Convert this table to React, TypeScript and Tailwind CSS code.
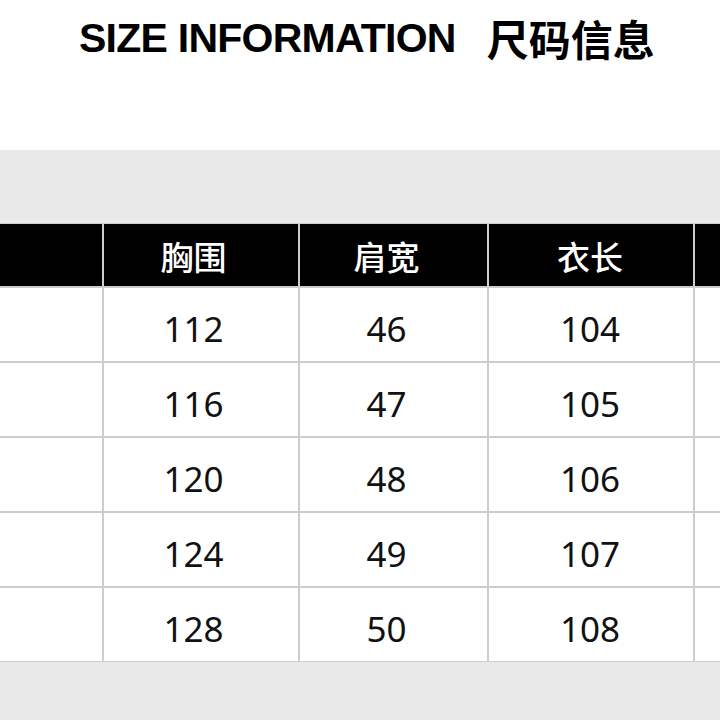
import React from 'react';

const headers = ['', '胸围', '肩宽', '衣长', ''];
const rows = [
  ['112', '46', '104'],
  ['116', '47', '105'],
  ['120', '48', '106'],
  ['124', '49', '107'],
  ['128', '50', '108'],
];

const cols = 'grid grid-cols-[102px_194px_187px_204px_1fr] gap-x-[2px]';
// the printed chart sits a little left of centre in the first two data columns
const shift = ['', 'pr-[15px]', 'pr-[14px]', 'pr-[2px]', ''];

const App = () => {
  return (
    <div className="w-[720px] h-[720px] overflow-hidden bg-white flex flex-col">
      <div className="h-[150px] flex items-start pt-[15px] pl-[79px] shrink-0">
        <span className="font-['Liberation_Sans',sans-serif] font-bold text-[41px] leading-[46px] tracking-[-0.75px] text-black">
          SIZE INFORMATION
        </span>
        <span className="ml-[31px] font-['Noto_Sans_CJK_SC',sans-serif] font-bold text-[42px] leading-[46px] text-black">
          尺码信息
        </span>
      </div>
      <div className="h-[73px] bg-[#e9e9e9] shrink-0" />
      <div className="bg-[#cdcdcd] flex flex-col gap-y-[2px] py-[1px] shrink-0">
        <div className={`${cols} h-[62px]`}>
          {headers.map((h, i) => (
            <div
              key={i}
              className={`bg-black flex items-center justify-center pt-[4px] ${shift[i]} text-white font-['Noto_Sans_CJK_SC',sans-serif] font-medium text-[33px]`}
            >
              {h}
            </div>
          ))}
        </div>
        {rows.map((r, i) => (
          <div key={i} className={`${cols} h-[73px]`}>
            <div className="bg-white" />
            {r.map((v, j) => (
              <div
                key={j}
                className={`bg-white flex items-center justify-center pt-[9px] ${shift[j + 1]} text-[#111] font-['Noto_Sans',sans-serif] text-[35px]`}
              >
                {v}
              </div>
            ))}
            <div className="bg-white" />
          </div>
        ))}
      </div>
      <div className="flex-1 bg-[#e9e9e9]" />
    </div>
  );
};

export default App;
